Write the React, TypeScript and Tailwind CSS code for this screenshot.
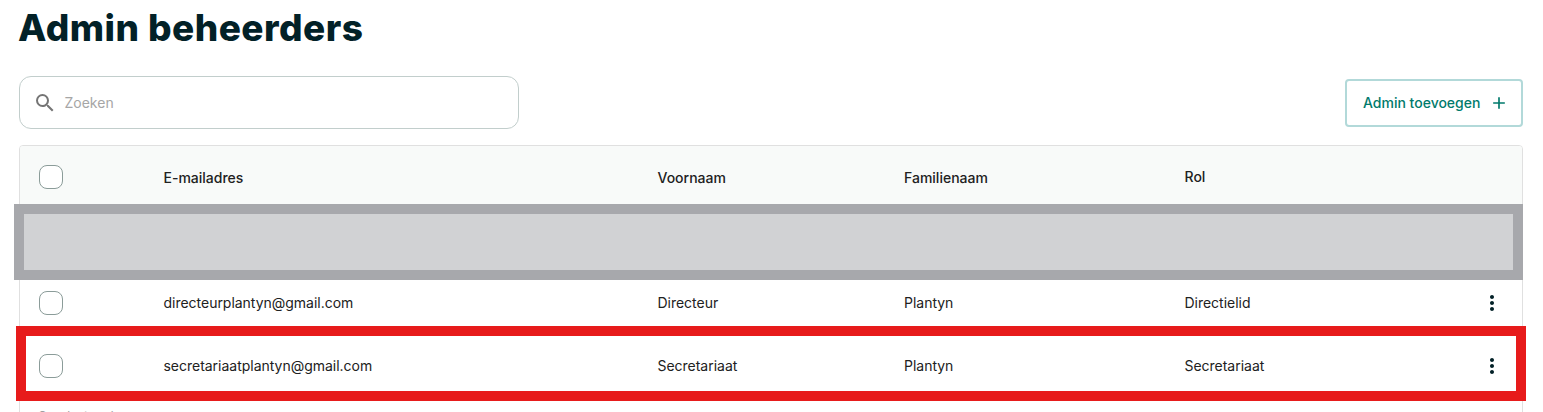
import { MdAdd, MdMoreVert, MdSearch } from "react-icons/md";

type Admin = {
  email: string;
  firstName: string;
  lastName: string;
  role: string;
};

const ADMINS: Admin[] = [
  { email: "directeurplantyn@gmail.com", firstName: "Directeur", lastName: "Plantyn", role: "Directielid" },
  { email: "secretariaatplantyn@gmail.com", firstName: "Secretariaat", lastName: "Plantyn", role: "Secretariaat" },
];

const ROW_GRID = "grid grid-cols-[143.5px_494px_246.5px_280.5px_1fr_60px] items-center";

function Checkbox() {
  return <span className="ml-[19px] block size-6 rounded-lg border border-[#8b9c99] bg-white" />;
}

function AdminRow({ admin }: { admin: Admin }) {
  return (
    <div className={`${ROW_GRID} h-[63px] tracking-[-0.02px] text-[#212121]`}>
      <Checkbox />
      <span>{admin.email}</span>
      <span>{admin.firstName}</span>
      <span>{admin.lastName}</span>
      <span>{admin.role}</span>
      <button type="button" className="ml-[18px] flex size-6 items-center justify-center text-[#022127]">
        <MdMoreVert size={24} />
      </button>
    </div>
  );
}

export default function App() {
  return (
    <div className="relative h-[412px] w-[1543px] overflow-hidden bg-white pr-5 pl-[19px] font-['Inter',sans-serif] text-[14px]">
      <h1 className="-ml-px h-[76px] pt-[3px] text-[37px] leading-[50px] font-extrabold tracking-[0.45px] whitespace-nowrap text-[#022127]">
        Admin beheerders
      </h1>

      {/* Toolbar */}
      <div className="flex h-[53px] items-center justify-between">
        <div className="flex h-[53px] w-[500px] items-center rounded-xl border border-[#c2cecc] pl-[13px]">
          <MdSearch size={24} className="text-[#757575]" />
          <span className="ml-[7.5px] text-[#a6a6a6]">Zoeken</span>
        </div>
        <button
          type="button"
          className="flex h-12 w-[178px] items-center rounded-[4px] border-2 border-[#b2d9d9] pl-4 font-medium text-[#007a6c]"
        >
          <span className="whitespace-nowrap">Admin toevoegen</span>
          <MdAdd size={20} className="ml-[9px]" />
        </button>
      </div>

      {/* Table */}
      <div className="mt-4 h-[300px] rounded-t-[4px] border border-[#e0e0e0]">
        <div className={`${ROW_GRID} h-[62px] rounded-t-[3px] bg-[#f8faf9] font-medium text-[#212121]`}>
          <Checkbox />
          <span>E-mailadres</span>
          <span>Voornaam</span>
          <span>Familienaam</span>
          <span className="pb-0.5">Rol</span>
        </div>
        <div className="h-[63px]" />
        {ADMINS.map((admin) => (
          <AdminRow key={admin.email} admin={admin} />
        ))}
        <div className="pt-[9px] pl-[18px] text-[12px] leading-[20px] text-[#9e9e9e]">Geselecteerd</div>
      </div>

      {/* Masked row and highlight frame over the table */}
      <div className="absolute top-[204px] left-[14px] h-[76px] w-[1509px] border-[10px] border-[#a7a8ac] bg-[#d1d2d4]" />
      <div className="absolute top-[326px] left-4 h-[75px] w-[1510px] border-[10px] border-[#e71b1b]" />
    </div>
  );
}
